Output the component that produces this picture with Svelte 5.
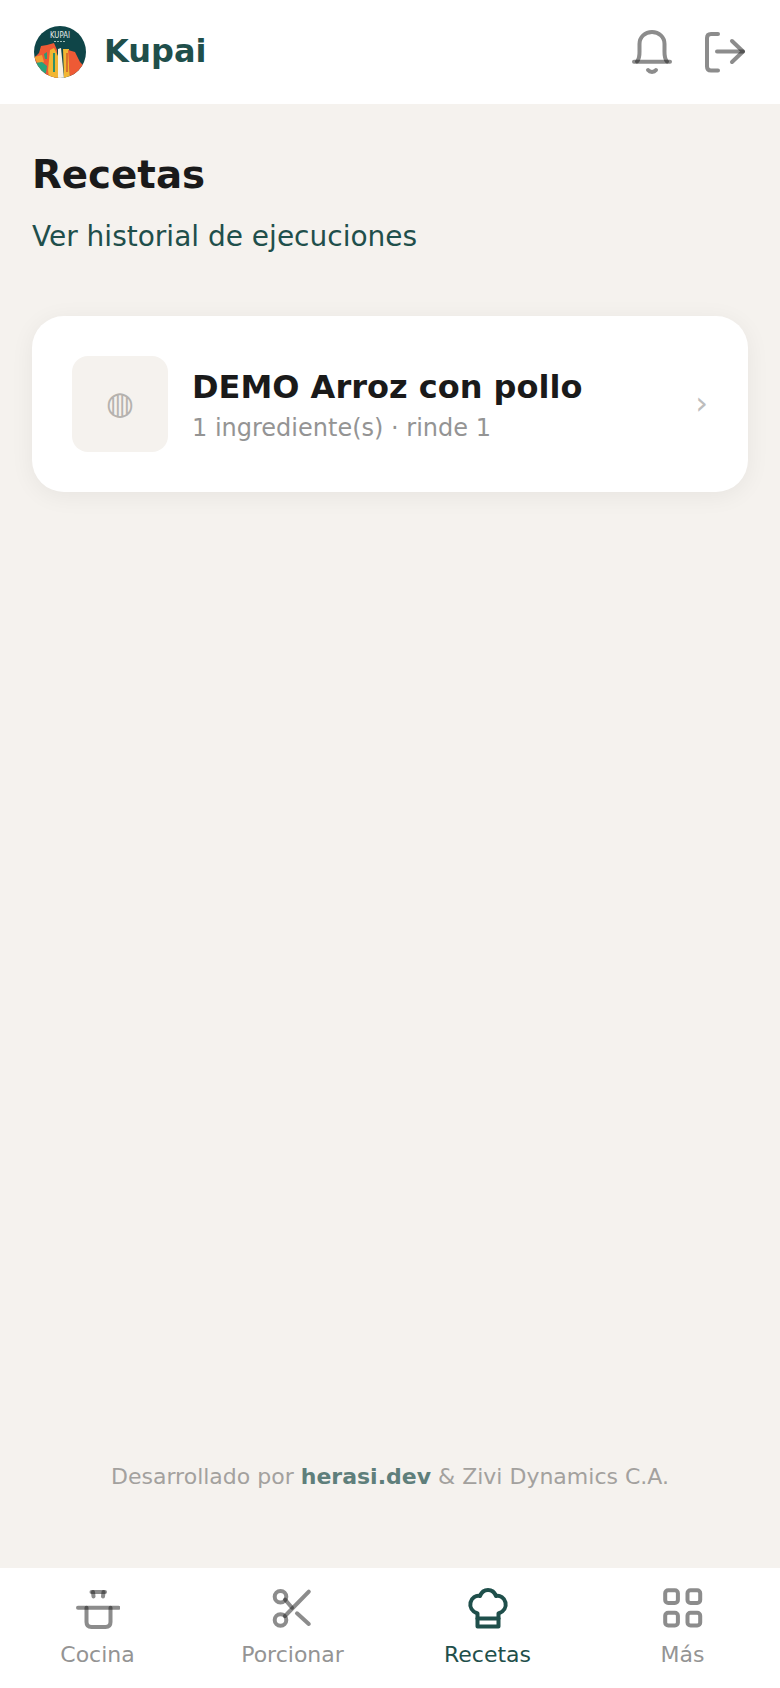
<script>
  const tabs = [
    { label: 'Cocina', id: 'pot' },
    { label: 'Porcionar', id: 'cut' },
    { label: 'Recetas', id: 'hat', active: true },
    { label: 'Más', id: 'grid' }
  ];
</script>

<div class="app">
  <header class="top">
    <div class="brand">
      <svg class="logo" viewBox="0 0 52 52" aria-hidden="true">
        <defs><clipPath id="c"><circle cx="26" cy="26" r="26" /></clipPath></defs>
        <g clip-path="url(#c)">
          <rect width="52" height="52" fill="#0f4548" />
          <path d="M0 32 L5 27 L7 20 L13 19 L20 17 L23 24 L24 52 L0 52Z" fill="#ee5a35" />
          <path d="M0 31 L8 29 L10 36 L4 38Z" fill="#f0a034" />
          <path d="M1 37 L8 36 L13 40 L12 47 L6 50 L1 44Z" fill="#27a37c" />
          <path d="M10 28 L13 26 L13 33 L11 33Z" fill="#2f9a73" />
          <path d="M16 24 L20 22 L24 30 L24 52 L15 52 L14 44Z" fill="#f2b632" />
          <path d="M19 27 L21 27 L21 46 L19 46Z" fill="#2f8f66" />
          <path d="M24 23 L27 22 L30 52 L24 52Z" fill="#f7f1e6" />
          <path d="M29 23 L35 23 L36 52 L30 52Z" fill="#f2b632" />
          <path d="M34 24 L41 26 L46 36 L49 39 L46 48 L36 52Z" fill="#ee5a35" />
          <path d="M32 27 L34 27 L34 46 L32 46Z" fill="#d9712c" />
        </g>
        <text x="26" y="12" text-anchor="middle" textLength="20" lengthAdjust="spacingAndGlyphs" class="logotext">KUPAI</text>
        <path d="M20 15.500H32" class="logoline" />
      </svg>
      <span class="name">Kupai</span>
    </div>
    <div class="actions">
      <svg class="ic" width="44" height="44" viewBox="0 0 44 44" aria-hidden="true">
        <path d="M4 31.700H40" />
        <path d="M7 31.500C10 28 9.500 24 9.500 20V14C9.500 7 15 2 22 2S34.500 7 34.500 14V20C34.500 24 34 28 37 31.500" />
        <path d="M18 40C20 42.500 24 42.500 26 40" />
      </svg>
      <svg class="ic" width="44" height="44" viewBox="0 0 44 44" aria-hidden="true">
        <path d="M14 4H7C4.500 4 3 5.500 3 8V36.500C3 39 4.500 40.500 7 40.500H14" />
        <path d="M13 21.500H39" />
        <path d="M28 11L39 21.500L28 32" />
      </svg>
    </div>
  </header>

  <main class="page">
    <h1>Recetas</h1>
    <a class="history" href="#h">Ver historial de ejecuciones</a>

    <article class="card">
      <div class="thumb">◍</div>
      <div class="info">
        <div class="title">DEMO Arroz con pollo</div>
        <div class="sub">1 ingrediente(s) · rinde 1</div>
      </div>
      <span class="chev">›</span>
    </article>

    <footer class="credit">Desarrollado por <b>herasi.dev</b> &amp; Zivi Dynamics C.A.</footer>
  </main>

  <nav class="tabs">
    {#each tabs as t}
      <div class="tab" class:active={t.active}>
        <svg class="ic" width="44" height="44" viewBox="0 0 44 44" aria-hidden="true">
          {#if t.id === 'pot'}
            <path d="M15.500 5H29" />
            <path d="M17 5L17.500 9.500" /><path d="M27.500 5L27 9.500" />
            <path d="M2 20.700H42.500" />
            <path d="M10.500 20.700V35C10.500 38.500 12 40 15.500 40H29.500C33 40 34.500 38.500 34.500 35V20.700" />
          {:else if t.id === 'cut'}
            <circle cx="9.500" cy="9.700" r="5.800" />
            <circle cx="9.500" cy="33" r="5.800" />
            <path d="M14 12.500L21 20.700" />
            <path d="M26 26.300L37.800 37" />
            <path d="M14 29L37.800 4.700" />
          {:else if t.id === 'hat'}
            <path d="M11.500 26.500C6 24.500 3.500 20 4.500 15.500C5.500 11 10 8 14 9C15.500 5 18.500 3 22 3C25.500 3 28.500 5 30 9C34 8 38.500 11 39.500 15.500C40.500 20 38 24.500 32.500 26.500V39.500H11.500Z" />
            <path d="M11.500 31.500H32.500" />
          {:else}
            <rect x="4.200" y="3.300" width="12.700" height="12.700" rx="3" />
            <rect x="26.500" y="3.300" width="12.700" height="12.700" rx="3" />
            <rect x="4.200" y="25.700" width="12.700" height="12.700" rx="3" />
            <rect x="26.500" y="25.700" width="12.700" height="12.700" rx="3" />
          {/if}
        </svg>
        <span>{t.label}</span>
      </div>
    {/each}
  </nav>
</div>

<style>
  :global(body) {
    margin: 0;
    background: #f5f2ee;
  }
  .app {
    display: flex;
    flex-direction: column;
    min-height: 1688px;
    font-family: "DejaVu Sans", sans-serif;
    color: #1a1a1a;
  }
  .top {
    height: 104px;
    flex: none;
    box-sizing: border-box;
    padding: 0 32px 0 34px;
    background: #fff;
    display: flex;
    align-items: center;
    justify-content: space-between;
  }
  .brand {
    display: flex;
    align-items: center;
    gap: 18px;
  }
  .logo {
    width: 52px;
    height: 52px;
    display: block;
  }
  .logotext {
    font-size: 9px;
    fill: #e9eeea;
    font-family: "DejaVu Sans", sans-serif;
  }
  .logoline {
    stroke: #9fbab5;
    stroke-width: 1;
    stroke-dasharray: 2 1;
  }
  .name {
    font-size: 32px;
    line-height: 40px;
    font-weight: 700;
    color: #1f4f4b;
    padding-bottom: 2px;
  }
  .actions {
    display: flex;
    gap: 30px;
  }
  .ic {
    display: block;
    fill: none;
    stroke: #1a1a1a;
    stroke-opacity: 0.5;
    stroke-width: 4;
    stroke-linecap: round;
    stroke-linejoin: round;
  }
  .page {
    flex: 1;
    display: flex;
    flex-direction: column;
    padding: 0 32px;
  }
  h1 {
    margin: 41px 0 0;
    font-size: 38.750px;
    line-height: 60px;
    font-weight: 700;
    color: #1a1a1a;
  }
  .history {
    margin-top: 11px;
    font-size: 28px;
    line-height: 42px;
    color: #1f4f4b;
    text-decoration: none;
  }
  .card {
    margin-top: 58px;
    height: 176px;
    box-sizing: border-box;
    padding: 0 40px;
    border-radius: 32px;
    background: #fff;
    box-shadow: 0 4px 24px rgba(0, 0, 0, 0.06);
    display: flex;
    align-items: center;
    gap: 24px;
  }
  .thumb {
    width: 96px;
    height: 96px;
    box-sizing: border-box;
    padding-bottom: 2px;
    flex: none;
    border-radius: 16px;
    background: #f5f2ee;
    color: #b5b2ae;
    font-size: 32px;
    display: flex;
    align-items: center;
    justify-content: center;
  }
  .info {
    flex: 1;
    min-width: 0;
    padding-top: 3px;
  }
  .title {
    font-size: 32px;
    line-height: 42px;
    font-weight: 700;
    color: #1a1a1a;
  }
  .sub {
    margin-top: 3px;
    font-size: 24px;
    line-height: 34px;
    color: #949494;
  }
  .chev {
    font-size: 32px;
    line-height: 40px;
    padding: 0 0 3px 1px;
    color: #bdbdbd;
  }
  .credit {
    margin-top: auto;
    padding-bottom: 74px;
    text-align: center;
    font-size: 22px;
    line-height: 34px;
    color: #a3a19e;
  }
  .credit b {
    color: #5f7f7b;
  }
  .tabs {
    height: 120px;
    flex: none;
    background: #fff;
    display: grid;
    grid-template-columns: repeat(4, 1fr);
  }
  .tab {
    display: flex;
    flex-direction: column;
    align-items: center;
    padding-top: 19px;
    gap: 8px;
    font-size: 22px;
    line-height: 32px;
    color: #949494;
  }
  .tab.active {
    color: #1f4f4b;
  }
  .tab.active .ic {
    stroke: #1f4f4b;
    stroke-opacity: 1;
  }
</style>
